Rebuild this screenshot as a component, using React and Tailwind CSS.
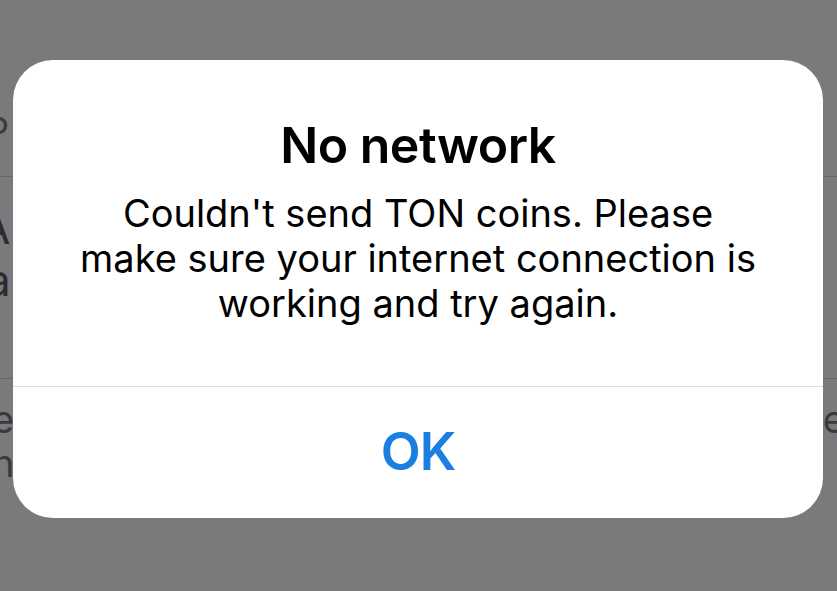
import React from 'react';

export default function App() {
  return (
    <div
      className="relative h-[591px] w-[837px] overflow-hidden bg-[#7a7a7c] text-[#3a3a3c]"
      style={{ fontFamily: 'Inter, "Noto Sans", sans-serif' }}
    >
      {/* page behind the alert */}
      <div className="flex flex-col pt-[100px]">
        <div className="flex h-[77px] items-start border-b border-[#66666a] pt-[10px]">
          <span className="ml-[-14px] text-[36px] leading-[40px]">P</span>
        </div>
        <div className="flex h-[202px] flex-col gap-[6px] border-b border-[#66666a] pt-[28px]">
          <span className="ml-[-20px] text-[44px] leading-[46px] text-[#2c2c2e]">A</span>
          <span className="ml-[-14px] text-[44px] leading-[46px] text-[#2c2c2e]">a</span>
        </div>
        <div className="flex justify-between pt-[18px]">
          <div className="flex flex-col">
            <span className="ml-[-8px] text-[38px] leading-[44px]">e</span>
            <span className="ml-[-8px] text-[38px] leading-[44px]">h</span>
          </div>
          <span className="mr-[-8px] text-[38px] leading-[44px]">e</span>
        </div>
      </div>

      {/* alert */}
      <div className="absolute left-[13px] top-[60px] flex h-[458px] w-[810px] flex-col rounded-[40px] bg-white text-black">
        <div className="flex h-[326px] flex-col items-center pt-[55px] text-center">
          <div className="text-[50px] font-semibold leading-[60px] tracking-[-0.5px]">No network</div>
          <div className="mt-[16px] text-[38px] leading-[45px]">
            Couldn't send TON coins. Please
            <br />
            make sure your internet connection is
            <br />
            working and try again.
          </div>
        </div>
        <div className="h-px bg-[#dedee0]" />
        <div className="flex flex-1 items-center justify-center pb-[2px]">
          <span className="text-[52px] font-semibold leading-none tracking-[-1px] text-[#1a7fe1]">OK</span>
        </div>
      </div>
    </div>
  );
}
